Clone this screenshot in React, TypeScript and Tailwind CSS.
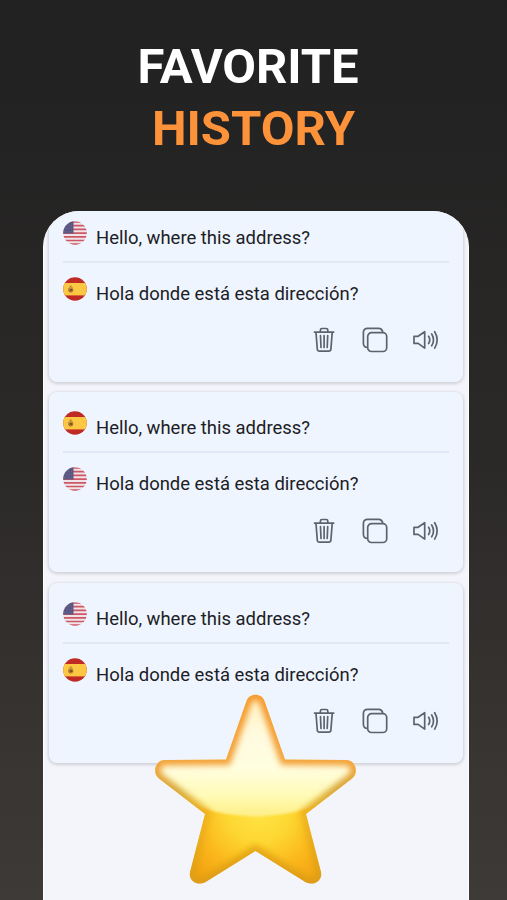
import React, { useId } from "react";

type Country = "us" | "es";

interface HistoryEntry {
  id: number;
  from: Country;
  to: Country;
  text: string;
  translation: string;
}

const entries: HistoryEntry[] = [
  { id: 1, from: "us", to: "es", text: "Hello, where this address?", translation: "Hola donde está esta dirección?" },
  { id: 2, from: "es", to: "us", text: "Hello, where this address?", translation: "Hola donde está esta dirección?" },
  { id: 3, from: "us", to: "es", text: "Hello, where this address?", translation: "Hola donde está esta dirección?" },
];

function Flag({ country }: { country: Country }) {
  const clip = useId();
  return (
    <svg viewBox="0 0 24 24" className="h-6 w-6 shrink-0">
      <clipPath id={clip}>
        <circle cx="12" cy="12" r="11.8" />
      </clipPath>
      <g clipPath={`url(#${clip})`}>
        {country === "us" ? (
          <>
            <rect width="24" height="24" fill="#f0e4ea" />
            <path
              d="M0 1h24M0 4.7h24M0 8.4h24M0 12.1h24M0 15.8h24M0 19.5h24M0 23.2h24"
              stroke="#cc5866"
              strokeWidth="1.7"
            />
            <rect width="10.5" height="12.5" fill="#5a5883" />
            <path
              d="M3 4.5h7M1 7.5h9M1 10.5h9"
              stroke="#716f96"
              strokeWidth=".7"
              strokeDasharray="1 1.4"
            />
          </>
        ) : (
          <>
            <rect width="24" height="24" fill="#c02a25" />
            <rect y="6" width="24" height="12.4" fill="#fcc742" />
            <ellipse cx="7.9" cy="12.6" rx="2.5" ry="3.2" fill="#d09a35" />
            <path d="M6.8 9.4 8.6 9M6 11.2q-.7 2.4 1 4" stroke="#a57b35" strokeWidth="1.1" fill="none" />
            <circle cx="8.2" cy="13" r="1.6" fill="#80522e" />
          </>
        )}
      </g>
    </svg>
  );
}

function TrashIcon() {
  return (
    <svg viewBox="0 0 24 28" className="h-7 w-6" fill="none" stroke="currentColor" strokeWidth="1.7" strokeLinecap="round" strokeLinejoin="round">
      <path d="M2.5 6.1h19.2M8.4 5.7V4.1a1.6 1.6 0 0 1 1.6-1.6h4.2a1.6 1.6 0 0 1 1.6 1.6v1.6M4 6.6l1.3 16.600a2.200 2.200 0 0 0 2.200 2h9.200a2.200 2.200 0 0 0 2.200-2L20.200 6.600" />
      <path d="M8.500 9.700l.5 11.800M12.100 9.700v11.800M15.700 9.700l-.5 11.800" />
    </svg>
  );
}

function CopyIcon() {
  return (
    <svg viewBox="0 0 28 28" className="h-7 w-7" fill="none" stroke="currentColor" strokeWidth="1.7" strokeLinejoin="round">
      <rect x="6.700" y="6.700" width="19" height="18.800" rx="3.800" />
      <path d="M6.700 21.500c-2.700 0-4.300-1.700-4.300-4.200V6.300a4 4 0 0 1 4-4h11.100c2.500 0 4 1.600 4.300 4.300" />
    </svg>
  );
}

function SpeakerIcon() {
  return (
    <svg viewBox="0 0 28 28" className="h-7 w-7" fill="none" stroke="currentColor" strokeWidth="1.7" strokeLinecap="round" strokeLinejoin="round">
      <path d="M2 10.300h4.100L12.700 5.700v16.400l-6.600-4.700H2z" />
      <path d="M16.600 10.300q2.300 3.600 0 7.200M19.700 8q3.600 5.900 0 11.800M22.700 5.700q4.900 8.200 0 16.400" />
    </svg>
  );
}

function HistoryCard({ entry }: { entry: HistoryEntry }) {
  return (
    <div className="h-[180px] rounded-lg bg-[#eef5ff] px-3.5 pt-[19px] shadow-[0_1px_3px_1px_rgba(70,70,85,0.2)]">
      <div className="flex h-[42px] items-start gap-[9px] border-b-2 border-[#e0e8f5]">
        <Flag country={entry.from} />
        <span className="mt-[5px] text-[18.450px] leading-6 whitespace-nowrap">{entry.text}</span>
      </div>
      <div className="mt-[14px] flex h-12 items-start gap-[9px]">
        <Flag country={entry.to} />
        <span className="mt-[5px] text-[18.450px] leading-6 whitespace-nowrap">{entry.translation}</span>
      </div>
      <div className="mt-[1.5px] flex items-center justify-end pr-[9px] text-[#5b646d]">
        <button aria-label="Delete"><TrashIcon /></button>
        <button aria-label="Copy" className="ml-[25px]"><CopyIcon /></button>
        <button aria-label="Listen" className="ml-[23px]"><SpeakerIcon /></button>
      </div>
    </div>
  );
}

const starPath =
  "M91.500 7C94-1.500 107-1.500 109.500 7L130 65.500 191 66C201 66 204.500 79 196.500 85L151 120 166 178C168 187 158 193 149.500 187.500L100.500 157 51.500 187.500C43 193 33 187 35 178L50 120 4.500 85C-3.500 79 0 66 10 66L71 65.500Z";

function Star() {
  return (
    <svg viewBox="0 0 201 191" className="absolute top-[694px] left-[155px] h-[191px] w-[201px]">
      <defs>
        <linearGradient id="rim" gradientUnits="userSpaceOnUse" x1="0" y1="0" x2="0" y2="191">
          <stop offset="0" stopColor="#f5982a" />
          <stop offset=".36" stopColor="#f3a034" />
          <stop offset=".5" stopColor="#d6a436" />
          <stop offset=".64" stopColor="#f0b41e" />
          <stop offset="1" stopColor="#dc9c14" />
        </linearGradient>
        <radialGradient id="body" gradientUnits="userSpaceOnUse" cx="104" cy="116" r="88">
          <stop offset="0" stopColor="#ffe445" />
          <stop offset=".35" stopColor="#fdd833" />
          <stop offset=".7" stopColor="#fbb81c" />
          <stop offset="1" stopColor="#f2a213" />
        </radialGradient>
        <linearGradient id="shine" gradientUnits="userSpaceOnUse" x1="0" y1="0" x2="0" y2="123">
          <stop offset="0" stopColor="#fff2c0" />
          <stop offset=".35" stopColor="#fffbe0" />
          <stop offset=".6" stopColor="#fffee0" />
          <stop offset=".82" stopColor="#fffbb8" />
          <stop offset="1" stopColor="#feee84" />
        </linearGradient>
        <filter id="soft" x="-10%" y="-10%" width="120%" height="120%">
          <feGaussianBlur stdDeviation="3.2" />
        </filter>
        <filter id="softEdge">
          <feGaussianBlur stdDeviation="1" />
        </filter>
        <clipPath id="starShape">
          <path d={starPath} />
        </clipPath>
      </defs>
      <g clipPath="url(#starShape)">
        <path d={starPath} fill="url(#body)" />
        <path
          d="M-10-10H211V84Q160 122 100.500 122.500 41 122-10 84Z"
          fill="url(#shine)"
          filter="url(#softEdge)"
        />
        <path d={starPath} fill="none" stroke="url(#rim)" strokeWidth="11" filter="url(#soft)" />
      </g>
    </svg>
  );
}

export default function App() {
  return (
    <div className="relative flex h-[900px] w-[507px] flex-col overflow-hidden bg-linear-to-b from-[#212121] via-[#2b2928] to-[#3e3a37] font-[Roboto,sans-serif]">
      <h1 className="h-[211px] pt-9 text-center text-[49px] leading-[61px] font-bold text-white">
        <span className="block pr-[11px] tracking-[-0.1px]">FAVORITE</span>
        <span className="block pt-px text-[#fc923a]">HISTORY</span>
      </h1>
      <main className="ml-[43px] w-[426px] flex-1 overflow-hidden rounded-t-[36px] border-x border-white bg-[#f4f5fa] px-[5px] text-[#1c2024]">
        <div className="-mt-[9.500px] flex flex-col gap-[10.700px]">
          {entries.map((entry) => (
            <HistoryCard key={entry.id} entry={entry} />
          ))}
        </div>
      </main>
      <Star />
    </div>
  );
}
